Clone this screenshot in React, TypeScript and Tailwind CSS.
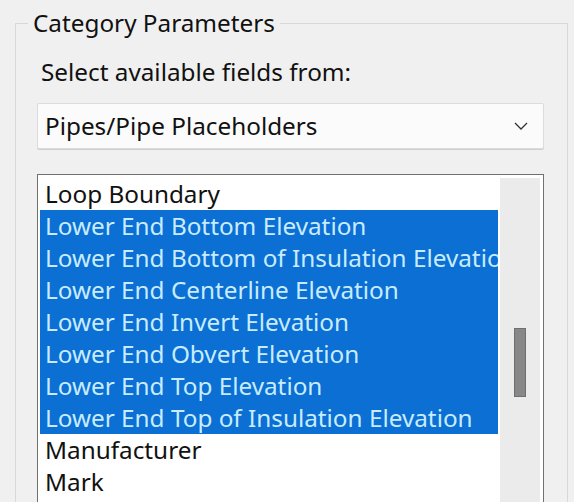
import React from 'react';

const items = [
  { label: 'Loop Boundary', selected: false },
  { label: 'Lower End Bottom Elevation', selected: true },
  { label: 'Lower End Bottom of Insulation Elevation', selected: true },
  { label: 'Lower End Centerline Elevation', selected: true },
  { label: 'Lower End Invert Elevation', selected: true },
  { label: 'Lower End Obvert Elevation', selected: true },
  { label: 'Lower End Top Elevation', selected: true },
  { label: 'Lower End Top of Insulation Elevation', selected: true },
  { label: 'Manufacturer', selected: false },
  { label: 'Mark', selected: false },
];

const Chevron = () => (
  <svg width="14" height="8" viewBox="0 0 14 8" fill="none" className="text-[#333]">
    <path d="M1 1l6 6 6-6" stroke="currentColor" strokeWidth="1.3" />
  </svg>
);

const App: React.FC = () => {
  return (
    <div
      className="h-[502px] w-[574px] overflow-hidden bg-[#f0f0f0] pt-[10px] pl-[15px] text-[24.3px] leading-[26px] text-[#111]"
      style={{ fontFamily: '"Noto Sans", "Open Sans", sans-serif' }}
    >
      <fieldset className="w-[553px] h-[520px] border border-[#d8d8d8] pl-[21px] pr-[23px]">
        <legend className="-ml-[9px] px-[5px]">Category Parameters</legend>

        <div className="mt-[23px] pl-[4px]">Select available fields from:</div>

        <div className="mt-[18px] flex h-[46px] items-center justify-between rounded-[2px] border border-[#dcdcdc] bg-[#fbfbfb] pl-[7px] pr-[15px] shadow-[0_1px_0_#cfcfcf]">
          <span>Pipes/Pipe Placeholders</span>
          <Chevron />
        </div>

        <div className="mt-[25px] flex h-[340px] w-[507px] border border-[#707070] bg-white pl-[2px] pt-[3px] pr-[1px]">
          <div className="flex w-[458px] flex-col overflow-hidden">
            {items.map((it) => (
              <div
                key={it.label}
                className={
                  'h-[32px] shrink-0 whitespace-nowrap pl-[5px] leading-[32px] ' +
                  (it.selected ? 'bg-[#0b6fd4] text-[#c8ecff]' : 'text-[#111]')
                }
              >
                {it.label}
              </div>
            ))}
          </div>
          <div className="ml-[2px] w-[40px] bg-[#ebebeb] pt-[150px]">
            <div className="mx-auto h-[69px] w-[12px] border border-[#6f6f6f] bg-[#888]" />
          </div>
        </div>
      </fieldset>
    </div>
  );
};

export default App;
